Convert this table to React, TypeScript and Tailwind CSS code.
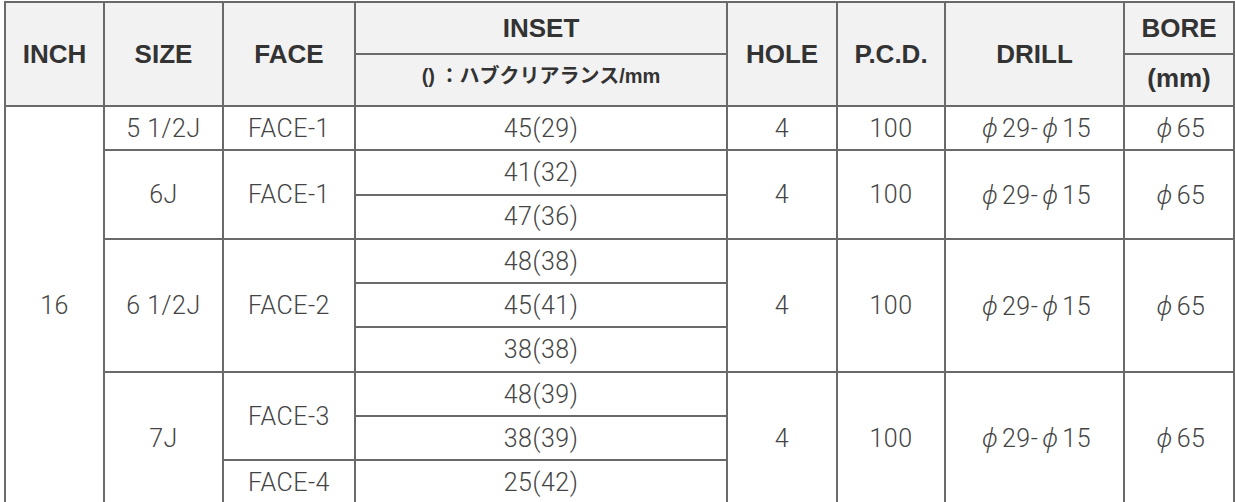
import React from "react";

const B = "border-2 border-[#6a6a6a]";
const TH = `${B} bg-[#f2f2f2] text-[#333] font-bold text-[26px] text-center align-middle p-0`;
const TD = `${B} bg-white text-[#444] font-light text-[25px] tracking-[0.5px] text-center align-middle p-0 pt-[1px]`;

function Phi() {
  return (
    <span
      className="italic font-light inline-block w-[24px] text-center"
      style={{ fontFamily: '"Noto Sans", sans-serif' }}
    >
      ϕ
    </span>
  );
}

function Drill() {
  return (
    <span>
      <Phi />
      29-
      <Phi />
      15
    </span>
  );
}

function Bore() {
  return (
    <span>
      <Phi />
      65
    </span>
  );
}

export default function App() {
  return (
    <div className="w-[1235px] h-[502px] overflow-hidden bg-white">
      <table
        className="border-collapse table-fixed ml-[4px] mt-[1px] w-[1229px]"
        style={{ fontFamily: 'Roboto, "Noto Sans CJK JP", sans-serif' }}
      >
        <colgroup>
          <col className="w-[99px]" />
          <col className="w-[119px]" />
          <col className="w-[132px]" />
          <col className="w-[372px]" />
          <col className="w-[110px]" />
          <col className="w-[108px]" />
          <col className="w-[179px]" />
          <col className="w-[110px]" />
        </colgroup>
        <thead style={{ fontFamily: '"Liberation Sans", "Noto Sans CJK JP", sans-serif' }}>
          <tr className="h-[52px]">
            <th rowSpan={2} className={TH}>INCH</th>
            <th rowSpan={2} className={TH}>SIZE</th>
            <th rowSpan={2} className={TH}>FACE</th>
            <th className={TH}>INSET</th>
            <th rowSpan={2} className={TH}>HOLE</th>
            <th rowSpan={2} className={TH}>P.C.D.</th>
            <th rowSpan={2} className={TH}>DRILL</th>
            <th className={TH}>BORE</th>
          </tr>
          <tr className="h-[52px]">
            <th className={`${B} bg-[#f2f2f2] text-[#333] font-bold text-[20px] text-center align-middle p-0 pb-[10px]`}>
              <span style={{ fontFamily: '"Liberation Sans", sans-serif' }}>()</span>
              <span style={{ fontFamily: '"Noto Sans CJK JP", sans-serif' }}> ：ハブクリアランス</span>
              <span style={{ fontFamily: '"Liberation Sans", sans-serif' }}>/mm</span>
            </th>
            <th className={`${TH} text-[24px] pb-[4px]`}>(mm)</th>
          </tr>
        </thead>
        <tbody>
          <tr className="h-[44.3px]">
            <td rowSpan={9} className={TD}>16</td>
            <td className={TD}>5 1/2J</td>
            <td className={TD}>FACE-1</td>
            <td className={TD}>45(29)</td>
            <td className={TD}>4</td>
            <td className={TD}>100</td>
            <td className={TD}><Drill /></td>
            <td className={TD}><Bore /></td>
          </tr>
          <tr className="h-[44.3px]">
            <td rowSpan={2} className={TD}>6J</td>
            <td rowSpan={2} className={TD}>FACE-1</td>
            <td className={TD}>41(32)</td>
            <td rowSpan={2} className={TD}>4</td>
            <td rowSpan={2} className={TD}>100</td>
            <td rowSpan={2} className={TD}><Drill /></td>
            <td rowSpan={2} className={TD}><Bore /></td>
          </tr>
          <tr className="h-[44.3px]">
            <td className={TD}>47(36)</td>
          </tr>
          <tr className="h-[44.3px]">
            <td rowSpan={3} className={TD}>6 1/2J</td>
            <td rowSpan={3} className={TD}>FACE-2</td>
            <td className={TD}>48(38)</td>
            <td rowSpan={3} className={TD}>4</td>
            <td rowSpan={3} className={TD}>100</td>
            <td rowSpan={3} className={TD}><Drill /></td>
            <td rowSpan={3} className={TD}><Bore /></td>
          </tr>
          <tr className="h-[44.3px]">
            <td className={TD}>45(41)</td>
          </tr>
          <tr className="h-[44.3px]">
            <td className={TD}>38(38)</td>
          </tr>
          <tr className="h-[44.3px]">
            <td rowSpan={3} className={TD}>7J</td>
            <td rowSpan={2} className={TD}>FACE-3</td>
            <td className={TD}>48(39)</td>
            <td rowSpan={3} className={TD}>4</td>
            <td rowSpan={3} className={TD}>100</td>
            <td rowSpan={3} className={TD}><Drill /></td>
            <td rowSpan={3} className={TD}><Bore /></td>
          </tr>
          <tr className="h-[44.3px]">
            <td className={TD}>38(39)</td>
          </tr>
          <tr className="h-[44.3px]">
            <td className={TD}>FACE-4</td>
            <td className={TD}>25(42)</td>
          </tr>
        </tbody>
      </table>
    </div>
  );
}
